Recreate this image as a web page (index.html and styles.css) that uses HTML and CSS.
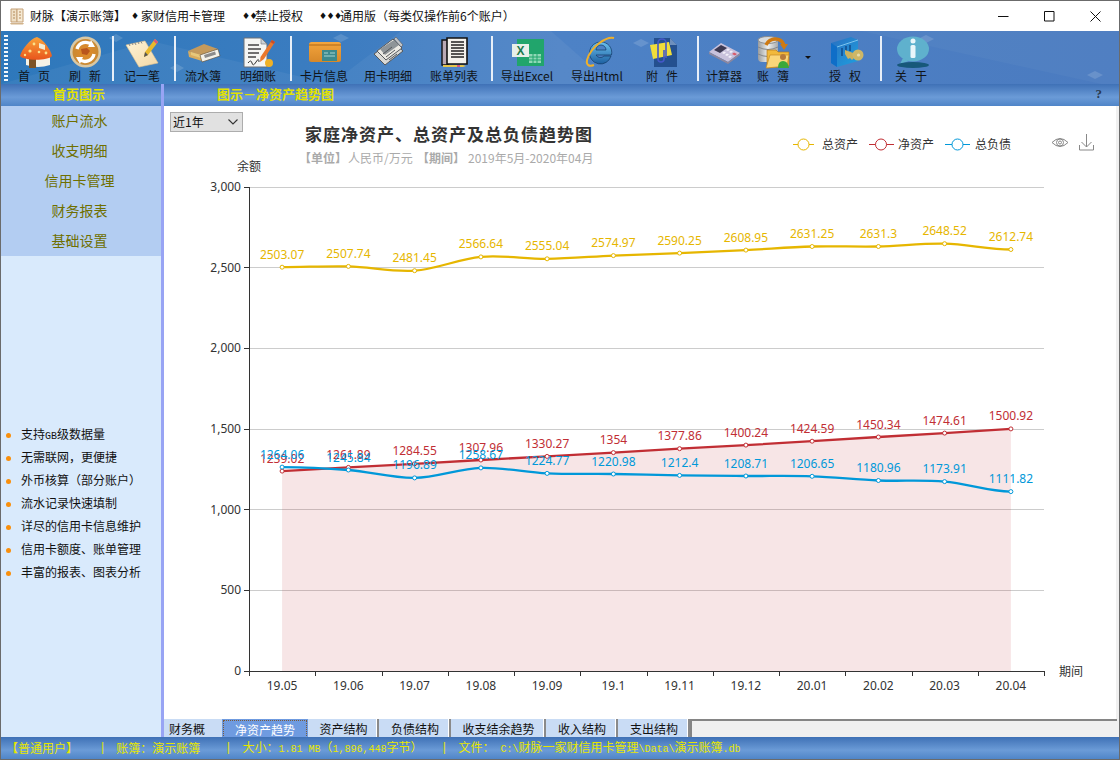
FILE: index.html
```html
<!DOCTYPE html>
<html lang="zh-CN">
<head>
<meta charset="utf-8">
<title>财脉</title>
<link rel="stylesheet" href="styles.css">
</head>
<body>
<div class="window">
  <header class="titlebar">
    <svg class="appicon" viewBox="0 0 16 18"><path d="M2 2h6l0 13H2z" fill="#efe0c6" stroke="#c4a076"/><path d="M8 2h6v13H8z" fill="#f6ead4" stroke="#c4a076"/><path d="M4 5h2M4 8h2M4 11h2M10 5h2M10 8h2M10 11h2" stroke="#b38a5a"/><path d="M1 16h14l-1 1.500H2z" fill="#d2b48c"/></svg>
    <span class="t-seg">财脉【演示账簿】</span>
    <span class="dm dm1">♦</span>
    <span class="t-seg">家财信用卡管理</span>
    <span class="dm dm2 gap17">♦♦</span>
    <span class="t-seg">禁止授权</span>
    <span class="dm dm3 gap16">♦♦♦</span>
    <span class="t-seg">通用版（每类仅操作前6个账户）</span>
    <div class="winctl">
      <svg viewBox="0 0 11 11" class="wc"><path d="M0 5.500h10.500" stroke="#111"/></svg>
      <svg viewBox="0 0 11 11" class="wc"><path d="M.5.500h9.500v9.500H.5z" fill="none" stroke="#111"/></svg>
      <svg viewBox="0 0 11 11" class="wc"><path d="M.5.500l10 10M10.500.500l-10 10" stroke="#111"/></svg>
    </div>
  </header>

  <nav class="toolbar">
    <svg class="deco" viewBox="0 0 1118 53"><path d="M0 53L150 10 330 53z" fill="#fff" opacity=".05"/><path d="M330 53L400 0h150l60 53z" fill="#fff" opacity=".05"/><path d="M860 0l240 53h18V0z" fill="#fff" opacity=".03"/><g fill="#fff" opacity=".14"><path d="M115 3l7 4-7 4-7-4z"/><path d="M340 3l8 4-8 4-8-4z"/><path d="M176 33l7 4-7 4-7-4z"/><path d="M524 8l8 4-8 4-8-4z"/><path d="M640 8l8 4-8 4-8-4z"/><path d="M925 4l8 4-8 4-8-4z"/><path d="M733 40l8 4-8 4-8-4z"/><path d="M1094 40l8 4-8 4-8-4z"/></g></svg>
    <div class="grip"></div>

    <div class="btn w52">
      <svg class="ic" viewBox="0 0 32 32"><defs><linearGradient id="g1" x1="0" y1="0" x2="0" y2="1"><stop offset="0" stop-color="#f9a33a"/><stop offset="1" stop-color="#e8551c"/></linearGradient></defs><path d="M8 20h24v9q-12 4-24 0z" fill="#f5f2e6"/><path d="M11 21h7v11h-7z" fill="#7d5426"/><path d="M19 1C25 3 33 14 34 20 30 25 6 25 2 20 4 13 12 3 19 1Z" fill="url(#g1)"/><g fill="#fbe08a"><circle cx="16" cy="8" r="1.400"/><circle cx="12" cy="15" r="1.600"/><circle cx="21" cy="16" r="1.300"/><circle cx="28" cy="17" r="1.400"/><circle cx="7" cy="19" r="1.200"/></g><path d="M21 7l6 2 0 5-6-2z" fill="#f3ecd2"/></svg>
      <span class="lb sp">首页</span>
    </div>
    <div class="btn w50">
      <svg class="ic" viewBox="0 0 32 32"><defs><radialGradient id="g2"><stop offset="0" stop-color="#e58a26"/><stop offset="1" stop-color="#c98a34"/></radialGradient></defs><circle cx="16.500" cy="16" r="15.500" fill="#d8c8a6"/><circle cx="16.500" cy="16" r="13" fill="url(#g2)"/><path d="M8 13a9 9 0 0 1 15-4" fill="none" stroke="#fff" stroke-width="3.400"/><path d="M25 18a9 9 0 0 1-15 5" fill="none" stroke="#fff" stroke-width="3.400"/><path d="M22 4l4 7-7 0z" fill="#fff"/><path d="M11 28l-4-7 7 0z" fill="#fff"/><path d="M12 13l6-1 3 3-3 4-5-1z" fill="#b9561d"/></svg>
      <span class="lb sp">刷新</span>
    </div>
    <i class="sep ml2 mr4"></i>
    <div class="btn w48">
      <svg class="ic" viewBox="0 0 32 32"><defs><linearGradient id="g3" x1="0" y1="0" x2="1" y2="1"><stop offset="0" stop-color="#fdf3d6"/><stop offset="1" stop-color="#f4d8a6"/></linearGradient></defs><path d="M0 9l19-4 13 22-19 4z" fill="url(#g3)" stroke="#e2c58f" stroke-width=".6"/><path d="M3 8l1 2M6 7l1 2M9 7l1 2M12 6l1 2M15 5.500l1 2" stroke="#8b8b8b"/><path d="M29 3l3 3-10 13-4 2 1-5z" fill="#e9b92c"/><path d="M29 3l3 3-1.500 2-3-3z" fill="#d9577c"/><path d="M18 21l1-5 3 3z" fill="#555"/></svg>
      <span class="lb">记一笔</span>
    </div>
    <i class="sep ml8 mr4"></i>
    <div class="btn w46">
      <svg class="ic" viewBox="0 0 32 32"><path d="M1 15L17 8l14 5-16 7z" fill="#c49a5c"/><path d="M1 15l14 5 0 5-13-4z" fill="#d9ad5f"/><path d="M4 16l10 3v3l-10-3z" fill="#e8c87a"/><path d="M15 20l16-7v6l-16 7z" fill="#7c5a30"/><path d="M13 19l18-6 2 7-18 6z" fill="#f4f2ea" stroke="#5b4a32" stroke-width=".6"/><path d="M17 19l11-3.500 1 3-11 3.500z" fill="#8c8c8c"/></svg>
      <span class="lb">流水簿</span>
    </div>
    <div class="btn w64">
      <svg class="ic" viewBox="0 0 32 32"><path d="M2 2h17l6 6v23H2z" fill="#f5f6f4" stroke="#6c7076"/><path d="M19 2v6h6z" fill="#cdd2d6" stroke="#6c7076" stroke-width=".6"/><path d="M6 9h11M6 13h13M6 17h11M6 21h8" stroke="#444" stroke-width="1.300"/><path d="M6 27q3-4 4 0t4-1 3 0" fill="none" stroke="#333"/><path d="M30 4l3 2-11 17-4 3 .5-5z" fill="#e9772c"/><path d="M30 4l3 2-1.500 2-3-2z" fill="#c94c2a"/><circle cx="27" cy="27" r="4" fill="#efb126"/></svg>
      <span class="lb">明细账</span>
    </div>
    <i class="sep mr4"></i>
    <div class="btn w56">
      <svg class="ic" viewBox="0 0 32 32"><defs><linearGradient id="g6" x1="0" y1="0" x2="0" y2="1"><stop offset="0" stop-color="#f3a53c"/><stop offset="1" stop-color="#d7882a"/></linearGradient></defs><rect x="1" y="6" width="32" height="20" rx="2.500" fill="url(#g6)"/><rect x="1" y="8" width="32" height="2" fill="#b96f1c" opacity=".6"/><rect x="14" y="14" width="15" height="11" fill="#3c8a8e"/><path d="M16 17h4M22 17h5M16 20h11" stroke="#a8d5d0"/></svg>
      <span class="lb">卡片信息</span>
    </div>
    <div class="btn w72">
      <svg class="ic" viewBox="0 0 32 32"><path d="M2 18L20 5l11 10-18 14z" fill="#d9d9d6" stroke="#55585c"/><path d="M5 15L21 3l9 9-16 12z" fill="#eceae4" stroke="#55585c"/><path d="M8 13L22 4l5 5-14 10z" fill="#8e9498"/><path d="M11 18l9-7M14 21l9-7M17 24l8-6" stroke="#55585c"/><path d="M24 1l7 8-2 2-7-8z" fill="#c0c4c8" stroke="#55585c" stroke-width=".6"/></svg>
      <span class="lb">用卡明细</span>
    </div>
    <div class="btn w60">
      <svg class="ic" viewBox="0 0 32 32"><path d="M4 4h6v25H4z" fill="#b9a9b4" stroke="#111" stroke-width="1.400"/><path d="M9 2h20v26H9z" fill="#f4f2ec" stroke="#111" stroke-width="1.600"/><path d="M13 6h13M13 9h13M13 12h13M13 15h13M13 18h13M13 21h13" stroke="#222" stroke-width="1.400"/><path d="M5 29h20l3 1-3 1H5z" fill="#e6c64c"/><path d="M19 29h3v2h-3z" fill="#d9577c"/></svg>
      <span class="lb">账单列表</span>
    </div>
    <i class="sep ml7 mr3"></i>
    <div class="btn w62">
      <svg class="ic" viewBox="0 0 32 32"><rect x="6" y="3" width="27" height="27" fill="#21a56c"/><path d="M18 18h12v9H18z" fill="#8fd8b6"/><path d="M18 21h12M18 24h12M22 18v9M26 18v9" stroke="#21a56c"/><rect x="1" y="8" width="17" height="13" fill="#e7efe9"/><text x="9.500" y="19" class="xl">X</text></svg>
      <span class="lb">导出Excel</span>
    </div>
    <div class="btn w78">
      <svg class="ic" viewBox="0 0 32 32"><defs><linearGradient id="g10" x1="0" y1="0" x2="0" y2="1"><stop offset="0" stop-color="#6cc0ee"/><stop offset="1" stop-color="#1c5fa0"/></linearGradient></defs><path d="M20 6a11 11 0 1 0 10 14h-7a5 5 0 0 1-8-1h15.500C32 12 27 6 20 6zM15 14a5 5 0 0 1 10 0z" fill="url(#g10)" stroke="#123a66" stroke-width=".7"/><path d="M33 2C26 0 10 10 6 24c-1 5 2 7 7 5" fill="none" stroke="#eeb02c" stroke-width="2"/></svg>
      <span class="lb">导出Html</span>
    </div>
    <div class="btn w52">
      <svg class="ic" viewBox="0 0 32 32"><path d="M8 2h16l7 7v22H8z" fill="#24508f"/><path d="M24 2v7h7z" fill="#6d8fbd"/><path d="M4 9l19-3 3 13-19 4z" fill="#f0dd3a"/><path d="M18 14v9a3 3 0 0 1-6 0V7a4 4 0 0 1 8 0v15" fill="none" stroke="#4458c8" stroke-width="1.600"/></svg>
      <span class="lb sp">附件</span>
    </div>
    <i class="sep ml9 mr1"></i>
    <div class="btn w48">
      <svg class="ic" viewBox="0 0 32 32"><path d="M1 16L13 7l19 10-12 9z" fill="#c9c2dc"/><path d="M1 16v2l19 10 12-9v-2l-12 9z" fill="#8d879e"/><path d="M6 14l7-5 6 3-7 5z" fill="#3d3a52"/><g fill="#f2eff8"><path d="M14 17l2-1.500 2 1-2 1.500z"/><path d="M17 19l2-1.500 2 1-2 1.500z"/><path d="M20 21l2-1.500 2 1-2 1.500z"/><path d="M18 14l2-1.500 2 1-2 1.500z"/><path d="M21 16l2-1.500 2 1-2 1.500z"/></g><path d="M24 18l2-1.500 3 1.500-2 1.500z" fill="#d85a6a"/></svg>
      <span class="lb">计算器</span>
    </div>
    <div class="btn w50">
      <svg class="ic" viewBox="0 0 32 32"><defs><linearGradient id="g13" x1="0" y1="0" x2="1" y2="0"><stop offset="0" stop-color="#9a9c9e"/><stop offset=".5" stop-color="#eef0f0"/><stop offset="1" stop-color="#a8aaac"/></linearGradient></defs><rect x="1" y="3" width="20" height="23" rx="4" fill="url(#g13)"/><ellipse cx="11" cy="4" rx="10" ry="3.500" fill="#d9dbdc" stroke="#8c8e90"/><path d="M1 11q10 5 20 0M1 18q10 5 20 0" fill="none" stroke="#85878a"/><path d="M9 9C13 1 24 1 27 9" fill="none" stroke="#cf7a12" stroke-width="3.500"/><path d="M23 8l8 0-4 6z" fill="#cf7a12"/><path d="M10 14h9l2 2h11v14l-22 2z" fill="#f2b93b" stroke="#b5791d" stroke-width=".7"/><path d="M9 32l4-13h19l-2 11z" fill="#fad67a" stroke="#c68a27" stroke-width=".7"/><circle cx="26" cy="21" r="3" fill="#b87b3a"/><path d="M21 32q0-7 5-7t6 7z" fill="#3aa83a"/></svg>
      <span class="lb sp">账簿</span>
    </div>
    <div class="drop"><i class="tri"></i></div>
    <div class="btn w54">
      <svg class="ic" viewBox="0 0 32 32"><defs><linearGradient id="g14" x1="0" y1="0" x2="1" y2="1"><stop offset="0" stop-color="#2a6fc0"/><stop offset="1" stop-color="#1ea0e0"/></linearGradient></defs><path d="M2 7L22 1l7 3v21L8 31l-6-4z" fill="url(#g14)"/><path d="M2 7l6 4v20l-6-4z" fill="#0f6ec8"/><path d="M8 11L29 4" stroke="#7cc4ee"/><path d="M13 12v8M17 10v8M21 9v6" stroke="#0c3d78" stroke-width="1.200"/><path d="M16 14l11 4v5l-2-1-2 2-2-2-2 1-3-5z" fill="#c9b15f"/><circle cx="29" cy="19" r="5.500" fill="#cdb767"/><circle cx="29.500" cy="19" r="1.600" fill="#e8dca8"/></svg>
      <span class="lb sp">授权</span>
    </div>
    <i class="sep ml8 mr3"></i>
    <div class="btn w52">
      <svg class="ic" viewBox="0 0 32 32"><ellipse cx="18" cy="13" rx="16" ry="12.500" fill="#5fb1cd"/><path d="M8 22l-3 6 9-3z" fill="#5fb1cd"/><ellipse cx="18" cy="29" rx="16" ry="3" fill="#17587a"/><circle cx="18" cy="5" r="2.500" fill="#eaf6fa"/><rect x="15.500" y="9" width="5" height="13" rx="1.500" fill="#eaf6fa"/></svg>
      <span class="lb sp">关于</span>
    </div>
  </nav>

  <div class="subhead">
    <div class="sh-left">首页图示</div>
    <div class="vbar"></div>
    <div class="sh-right"><span>图示－净资产趋势图</span><b class="help">?</b></div>
  </div>

  <div class="main">
    <aside class="side">
      <ul class="menu">
        <li>账户流水</li><li>收支明细</li><li>信用卡管理</li><li>财务报表</li><li>基础设置</li>
      </ul>
      <ul class="feat">
        <li>支持<span class="gb">GB</span>级数据量</li>
        <li>无需联网，更便捷</li>
        <li>外币核算（部分账户）</li>
        <li>流水记录快速填制</li>
        <li>详尽的信用卡信息维护</li>
        <li>信用卡额度、账单管理</li>
        <li>丰富的报表、图表分析</li>
      </ul>
    </aside>
    <div class="vbar"></div>
    <section class="content">
      <div class="chartwrap">
        <div class="range"><span>近1年</span><svg viewBox="0 0 10 6" class="chev"><path d="M.5.500L5 5 9.500.5" fill="none" stroke="#333" stroke-width="1.100"/></svg></div>
        <svg class="chart" viewBox="164 106 952 613">
          <text x="305" y="141" class="ctitle">家庭净资产、总资产及总负债趋势图</text>
          <text y="163" class="csub"><tspan x="299" class="csb">【单位】</tspan><tspan x="348">人民币/万元</tspan><tspan x="417" class="csb">【期间】</tspan><tspan x="468">2019年5月-2020年04月</tspan></text>

          <g class="legend">
            <g class="c-gold"><path d="M793 144.500h21" class="ll"/><circle cx="803.500" cy="144.500" r="5.500" class="lc"/></g>
            <text x="822" y="149">总资产</text>
            <g class="c-red"><path d="M869 144.500h25" class="ll"/><circle cx="881" cy="144.500" r="5.500" class="lc"/></g>
            <text x="898" y="149">净资产</text>
            <g class="c-blue"><path d="M945 144.500h25" class="ll"/><circle cx="957.500" cy="144.500" r="5.500" class="lc"/></g>
            <text x="975" y="149">总负债</text>
          </g>
          <g class="tools">
            <path d="M1052 142.500q8-8 16 0q-8 8-16 0z"/><circle cx="1060" cy="142.500" r="3.500"/><circle cx="1060" cy="142.500" r="1.500"/>
            <path d="M1086.500 134v13M1081.500 142l5 5 5-5M1079.500 145v5h14v-5"/>
          </g>

          <text x="237" y="171" class="axis">余额</text>
          <text x="1059" y="676" class="axis">期间</text>

          <path class="grid" d="M249 187.500H1044M249 267.500H1044M249 348.500H1044M249 429.500H1044M249 509.500H1044M249 590.500H1044"/>
          <path class="axisline" d="M249.500 187V671M244 187.500h5M244 267.500h5M244 348.500h5M244 429.500h5M244 509.500h5M244 590.500h5M244 671.500H1044M249.500 671v5M315.500 671v5M382.500 671v5M448.500 671v5M514.500 671v5M580.500 671v5M647.500 671v5M713.500 671v5M779.500 671v5M845.500 671v5M912.500 671v5M978.500 671v5M1044.500 671v5"/>
          <g class="ylab">
            <text x="241" y="191">3,000</text><text x="241" y="272">2,500</text><text x="241" y="352">2,000</text><text x="241" y="433">1,500</text><text x="241" y="514">1,000</text><text x="241" y="594">500</text><text x="241" y="675">0</text>
          </g>
          <g class="xlab">
            <text x="282.100" y="690">19.05</text><text x="348.400" y="690">19.06</text><text x="414.600" y="690">19.07</text><text x="480.900" y="690">19.08</text><text x="547.100" y="690">19.09</text><text x="613.400" y="690">19.1</text><text x="679.600" y="690">19.11</text><text x="745.900" y="690">19.12</text><text x="812.100" y="690">20.01</text><text x="878.400" y="690">20.02</text><text x="944.600" y="690">20.03</text><text x="1010.900" y="690">20.04</text>
          </g>

          <path class="area" d="M282.100 471.100L348.400 467.400 414.600 463.800 480.900 460 547.100 456.400 613.400 452.600 679.600 448.700 745.900 445.100 812.100 441.200 878.400 437 944.600 433.100 1010.900 428.900V671H282.100z"/>

          <g class="c-gold">
            <path class="ln" d="M282.100 267.200C304.200 267.200 326.300 265.800 348.400 266.400C370.500 267 392.500 272.300 414.600 270.700C436.700 269.100 458.800 258.900 480.900 256.900C503 254.900 525 259 547.100 258.800C569.200 258.600 591.300 256.550 613.400 255.600C635.500 254.650 657.500 254 679.600 253.100C701.700 252.200 723.800 251.200 745.900 250.100C768 249 790 247.100 812.100 246.500C834.200 245.900 856.300 247 878.400 246.500C900.500 246 922.500 243.200 944.600 243.700C966.700 244.200 988.800 249.500 1010.900 249.500"/>
            <g class="pt"><circle cx="282.100" cy="267.200" r="2"/><circle cx="348.400" cy="266.400" r="2"/><circle cx="414.600" cy="270.700" r="2"/><circle cx="480.900" cy="256.900" r="2"/><circle cx="547.100" cy="258.800" r="2"/><circle cx="613.400" cy="255.600" r="2"/><circle cx="679.600" cy="253.100" r="2"/><circle cx="745.900" cy="250.100" r="2"/><circle cx="812.100" cy="246.500" r="2"/><circle cx="878.400" cy="246.500" r="2"/><circle cx="944.600" cy="243.700" r="2"/><circle cx="1010.900" cy="249.500" r="2"/></g>
            <g class="dl"><text x="282.100" y="258.700">2503.07</text><text x="348.400" y="257.900">2507.74</text><text x="414.600" y="262.200">2481.45</text><text x="480.900" y="248.400">2566.64</text><text x="547.100" y="250.300">2555.04</text><text x="613.400" y="247.100">2574.97</text><text x="679.600" y="244.600">2590.25</text><text x="745.900" y="241.600">2608.95</text><text x="812.100" y="238">2631.25</text><text x="878.400" y="238">2631.3</text><text x="944.600" y="235.200">2648.52</text><text x="1010.900" y="241">2612.74</text></g>
          </g>

          <g class="c-red">
            <path class="ln" d="M282.100 471.100L348.400 467.400 414.600 463.800 480.900 460 547.100 456.400 613.400 452.600 679.600 448.700 745.900 445.100 812.100 441.200 878.400 437 944.600 433.100 1010.900 428.900"/>
            <g class="pt"><circle cx="282.100" cy="471.100" r="2"/><circle cx="348.400" cy="467.400" r="2"/><circle cx="414.600" cy="463.800" r="2"/><circle cx="480.900" cy="460" r="2"/><circle cx="547.100" cy="456.400" r="2"/><circle cx="613.400" cy="452.600" r="2"/><circle cx="679.600" cy="448.700" r="2"/><circle cx="745.900" cy="445.100" r="2"/><circle cx="812.100" cy="441.200" r="2"/><circle cx="878.400" cy="437" r="2"/><circle cx="944.600" cy="433.100" r="2"/><circle cx="1010.900" cy="428.900" r="2"/></g>
            <g class="dl"><text x="282.100" y="462.600">1239.02</text><text x="348.400" y="458.900">1261.89</text><text x="414.600" y="455.300">1284.55</text><text x="480.900" y="451.500">1307.96</text><text x="547.100" y="447.900">1330.27</text><text x="613.400" y="444.100">1354</text><text x="679.600" y="440.200">1377.86</text><text x="745.900" y="436.600">1400.24</text><text x="812.100" y="432.700">1424.59</text><text x="878.400" y="428.500">1450.34</text><text x="944.600" y="424.600">1474.61</text><text x="1010.900" y="420.400">1500.92</text></g>
          </g>

          <g class="c-blue">
            <path class="ln" d="M282.100 467.100C304.200 467.100 326.300 468.200 348.400 470C370.500 471.800 392.500 478.250 414.600 477.900C436.700 477.550 458.800 468.650 480.900 467.900C503 467.150 525 472.400 547.100 473.400C569.200 474.400 591.300 473.670 613.400 474C635.500 474.330 657.500 475.070 679.600 475.400C701.700 475.730 723.800 475.850 745.900 476C768 476.150 790 475.550 812.100 476.300C834.200 477.050 856.300 479.630 878.400 480.500C900.500 481.370 922.500 479.750 944.600 481.600C966.700 483.450 988.800 491.600 1010.900 491.600"/>
            <g class="pt"><circle cx="282.100" cy="467.100" r="2"/><circle cx="348.400" cy="470" r="2"/><circle cx="414.600" cy="477.900" r="2"/><circle cx="480.900" cy="467.900" r="2"/><circle cx="547.100" cy="473.400" r="2"/><circle cx="613.400" cy="474" r="2"/><circle cx="679.600" cy="475.400" r="2"/><circle cx="745.900" cy="476" r="2"/><circle cx="812.100" cy="476.300" r="2"/><circle cx="878.400" cy="480.500" r="2"/><circle cx="944.600" cy="481.600" r="2"/><circle cx="1010.900" cy="491.600" r="2"/></g>
            <g class="dl"><text x="282.100" y="458.600">1264.06</text><text x="348.400" y="461.500">1245.84</text><text x="414.600" y="469.400">1196.89</text><text x="480.900" y="459.400">1258.67</text><text x="547.100" y="464.900">1224.77</text><text x="613.400" y="465.500">1220.98</text><text x="679.600" y="466.900">1212.4</text><text x="745.900" y="467.500">1208.71</text><text x="812.100" y="467.800">1206.65</text><text x="878.400" y="472">1180.96</text><text x="944.600" y="473.100">1173.91</text><text x="1010.900" y="483.100">1111.82</text></g>
          </g>
        </svg>
      </div>
      <div class="tabs">
        <div class="tab t58 first">财务概</div>
        <div class="tab t86 on"><span>净资产趋势</span></div>
        <div class="tab t71">资产结构</div>
        <div class="tab t72">负债结构</div>
        <div class="tab t95">收支结余趋势</div>
        <div class="tab t72">收入结构</div>
        <div class="tab t72">支出结构</div>
        <div class="tabrest"></div>
      </div>
    </section>
  </div>

  <footer class="status">
    <span class="s1">【普通用户】</span>
    <span class="pipe">|</span>
    <span class="s2">账簿：演示账簿</span>
    <span class="pipe p2">|</span>
    <span class="s3">大小：<span class="mono">1.81 MB</span>（<span class="mono">1,896,448</span>字节）</span>
    <span class="pipe p3">|</span>
    <span>文件：<span class="mono"> C:\</span>财脉一家财信用卡管理<span class="mono">\Data\</span>演示账簿<span class="mono">.db</span></span>
  </footer>
</div>
</body>
</html>
```

FILE: styles.css
```css
* { box-sizing: border-box; }
html, body { margin: 0; padding: 0; }
body { font-family: "Noto Sans CJK SC", "Liberation Sans", sans-serif; font-size: 12px; color: #111; background: #fff; }
ul { list-style: none; margin: 0; padding: 0; }

.window { width: 1120px; height: 760px; border: 1px solid #6b6b6b; display: flex; flex-direction: column; overflow: hidden; background: #f0f0f0; }

/* title bar */
.titlebar { height: 30px; flex: none; background: #fff; display: flex; align-items: center; padding-left: 8px; line-height: 16px; }
.appicon { width: 16px; height: 18px; margin-right: 5px; flex: none; }
.t-seg { flex: none; white-space: nowrap; }
.dm { flex: none; font-family: "DejaVu Sans", sans-serif; font-size: 9px; letter-spacing: -.6px; white-space: nowrap; }
.dm1 { width: 10px; margin-left: 5px; }
.dm2 { width: 13px; }
.dm3 { width: 21px; }
.gap17 { margin-left: 17px; }
.gap16 { margin-left: 16px; }
.winctl { margin-left: auto; display: flex; margin-right: 18px; gap: 35px; }
.wc { width: 11px; height: 11px; display: block; }

/* toolbar */
.toolbar { height: 53px; flex: none; display: flex; position: relative; padding-left: 3px; background: linear-gradient(90deg, #2e78bb 0, #3a7cc0 300px, #4d82c6 560px, #4b7bc0 100%); }
.deco { position: absolute; left: 0; top: 0; width: 1118px; height: 53px; }
.grip { flex: none; width: 4px; height: 46px; margin: 4px 0 0 0; background: repeating-linear-gradient(180deg, #f4f8fb 0 2px, transparent 2px 4px); position: relative; }
.btn { flex: none; display: flex; flex-direction: column; align-items: center; padding-top: 5px; position: relative; }
.w46 { width: 46px; } .w48 { width: 48px; } .w50 { width: 50px; } .w52 { width: 52px; } .w54 { width: 54px; }
.w56 { width: 56px; } .w60 { width: 60px; } .w62 { width: 62px; } .w64 { width: 64px; } .w72 { width: 72px; } .w78 { width: 78px; }
.ic { width: 32px; height: 32px; display: block; overflow: visible; flex: none; }
.xl { font: bold 12px "Liberation Sans", sans-serif; fill: #1d7a4e; text-anchor: middle; }
.lb { line-height: 16px; white-space: nowrap; color: #101418; }
.sp { letter-spacing: 8px; margin-right: -8px; }
.sep { flex: none; display: block; width: 2px; height: 45px; margin-top: 5px; background: #e8eff8; position: relative; }
.ml2 { margin-left: 2px; } .ml7 { margin-left: 7px; } .ml8 { margin-left: 8px; } .ml9 { margin-left: 9px; }
.mr1 { margin-right: 1px; } .mr3 { margin-right: 3px; } .mr4 { margin-right: 4px; }
.drop { flex: none; width: 20px; display: flex; justify-content: center; padding-top: 25px; position: relative; }
.tri { display: block; width: 0; height: 0; border-left: 3px solid transparent; border-right: 3px solid transparent; border-top: 3px solid #111; }

/* sub header */
.subhead { height: 22px; flex: none; display: flex; background: linear-gradient(180deg, #3f71b6 0, #6b9bd7 60%, #4f85c8 100%); font-weight: 700; font-size: 13px; line-height: 20px; color: #e2e200; }
.sh-left { width: 160px; flex: none; text-align: center; padding-right: 4px; }
.vbar { width: 3px; flex: none; background: #98a4f4; }
.sh-right { flex: 1; display: flex; justify-content: space-between; padding: 0 17px 0 53px; }
.help { color: #2b3a4e; font-family: "Liberation Serif", serif; font-size: 13px; }

/* main */
.main { flex: 1; display: flex; min-height: 0; }
.side { width: 160px; flex: none; background: #d9eafc; }
.menu { background: #b3cdf2; padding-right: 3px; }
.menu li { height: 30px; line-height: 28px; text-align: center; font-size: 14px; color: #6f6f00; }
.feat { margin-top: 166px; padding-left: 5px; }
.feat li { height: 23px; line-height: 23px; color: #111; white-space: nowrap; }
.feat li::before { content: ""; display: inline-block; vertical-align: middle; width: 5px; height: 5px; border-radius: 50%; background: #f98f0c; margin-right: 10px; }
.gb { font-family: "Liberation Mono", monospace; font-size: 10px; }

.content { flex: 1; display: flex; flex-direction: column; min-width: 0; background: #f0f0f0; }
.chartwrap { width: 952px; height: 613px; background: #fff; position: relative; flex: none; }
.chart { display: block; width: 952px; height: 613px; font-family: "Noto Sans", "Noto Sans CJK SC", sans-serif; font-size: 12px; }
.range { position: absolute; left: 6px; top: 6px; width: 73px; height: 20px; background: #e1e1e1; border: 1px solid #adadad; display: flex; align-items: center; justify-content: space-between; padding: 0 4px 0 2px; z-index: 1; line-height: 16px; color: #111; }
.chev { width: 10px; height: 6px; display: block; }

.ctitle { font-family: "Noto Sans CJK SC", sans-serif; font-size: 17px; font-weight: 700; fill: #333; letter-spacing: 1px; }
.csub { font-family: "Noto Sans CJK SC", sans-serif; font-size: 12px; fill: #aaa; }
.csb { font-weight: 700; }
.legend text { fill: #333; font-family: "Noto Sans CJK SC", sans-serif; }
.ll { fill: none; stroke-width: 1; }
.lc { fill: #fff; stroke-width: 1; }
.tools path, .tools circle { fill: none; stroke: #888; stroke-width: 1; }
.axis { fill: #333; font-family: "Noto Sans CJK SC", sans-serif; }
.grid { stroke: #ccc; fill: none; stroke-width: 1; }
.axisline { stroke: #333; fill: none; stroke-width: 1; }
.ylab text { fill: #333; text-anchor: end; }
.xlab text { fill: #333; text-anchor: middle; }
.area { fill: #c12e34; fill-opacity: .125; }
.ln { fill: none; stroke-width: 2.300; }
.pt circle { fill: #fff; stroke-width: 1; }
.dl text { text-anchor: middle; }
.c-gold .ln, .c-gold .pt circle, .c-gold .ll, .c-gold .lc { stroke: #e6b600; }
.c-gold .dl text { fill: #e6b600; }
.c-red .ln, .c-red .pt circle, .c-red .ll, .c-red .lc { stroke: #c12e34; }
.c-red .dl text { fill: #c12e34; }
.c-blue .ln, .c-blue .pt circle, .c-blue .ll, .c-blue .lc { stroke: #0098d9; }
.c-blue .dl text { fill: #0098d9; }

/* tabs */
.tabs { height: 18px; flex: none; display: flex; }
.tab { flex: none; background: #c9dcf5; text-align: center; line-height: 19px; color: #111; border-right: 2px solid #8a8a8a; box-shadow: inset -1px 0 0 #fff; white-space: nowrap; padding-left: 2px; }
.first { text-align: left; padding-left: 5px; border-right: 0; box-shadow: none; }
.on { background: #6f9be0; color: #fff; padding: 1px; border-right: 0; box-shadow: none; }
.on span { display: block; height: 16px; line-height: 17px; border: 1px dotted #7a5a3a; border-bottom: 0; }
.t58 { width: 58px; } .t86 { width: 86px; } .t71 { width: 71px; } .t72 { width: 72px; } .t95 { width: 95px; }
.tabrest { flex: 1; background: #f0f0f0; border-top: 2px solid #858585; border-left: 2px solid #858585; margin-right: 2px; }

/* status bar */
.status { height: 22px; flex: none; display: flex; align-items: center; padding-left: 5px; background: linear-gradient(180deg, #3f71b6 0, #6b9bd7 60%, #4f85c8 100%); color: #e6e600; line-height: 22px; white-space: nowrap; }
.status > span { flex: none; }
.mono { font-family: "Liberation Mono", monospace; font-size: 10px; white-space: pre; }
.pipe { font-family: "Liberation Mono", monospace; font-size: 12px; }
.s1 { width: 93px; }
.s2 { margin-left: 10px; width: 108.600px; }
.s3 { width: 174px; }
.p2 { margin-right: 10.400px; }
.p3 { margin-left: 24.400px; margin-right: 10.400px; }
```
